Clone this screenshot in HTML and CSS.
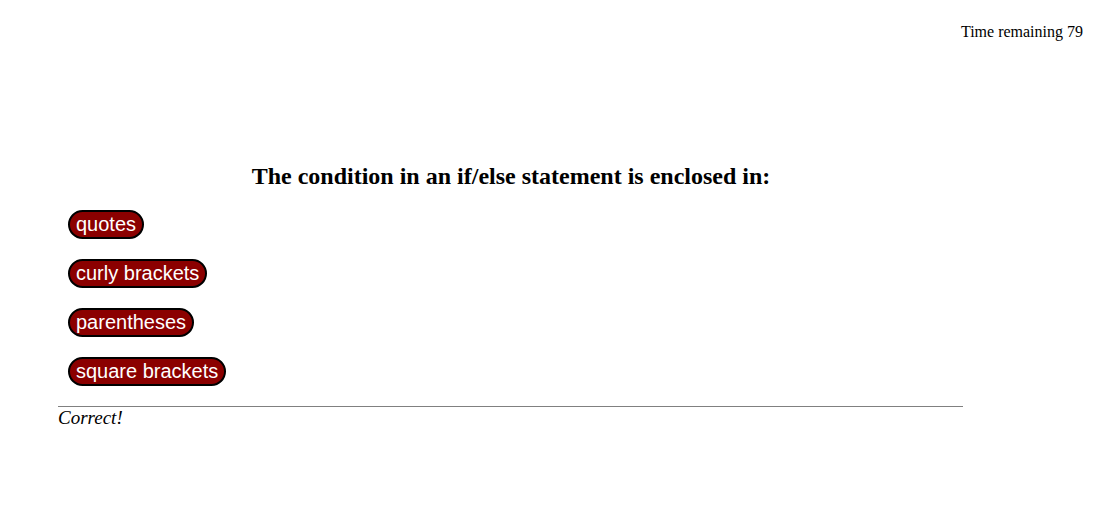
FILE: index.html
```html
<!DOCTYPE html>
<html>
<head>
<meta charset="utf-8">
<link rel="stylesheet" href="styles.css">
</head>
<body>
<div class="timer">Time remaining 79</div>
<div class="quiz">
  <h2 class="question">The condition in an if/else statement is enclosed in:</h2>
  <ul class="answers">
    <li><button class="answer">quotes</button></li>
    <li><button class="answer">curly brackets</button></li>
    <li><button class="answer">parentheses</button></li>
    <li><button class="answer">square brackets</button></li>
  </ul>
  <hr class="divider">
  <p class="feedback">Correct!</p>
</div>
</body>
</html>
```
FILE: styles.css
```css
body {
  margin: 8px;
  font-family: "Liberation Serif", "Times New Roman", serif;
  font-size: 16px;
  color: #000;
}
.timer {
  display: flex;
  justify-content: flex-end;
  padding: 15px 11px 0 0;
  line-height: 18px;
}
.quiz {
  width: 905px;
  margin: 0 0 0 50px;
}
.question {
  text-align: center;
  font-size: 24px;
  font-weight: bold;
  margin: 121px 0 0 1px;
  line-height: 28px;
}
.answers {
  list-style: none;
  margin: 20px 0 0;
  padding: 0 0 0 10px;
  display: flex;
  flex-direction: column;
  align-items: flex-start;
  gap: 20px;
}
.answer {
  font-family: "Liberation Sans", Arial, sans-serif;
  font-size: 20px;
  color: #fff;
  background: #8b0000;
  border: 2px solid #000;
  border-radius: 15px;
  padding: 0 6px;
  height: 29px;
  line-height: 25px;
  margin: 0;
  display: block;
}
.divider {
  margin: 20px 0 0;
  border: none;
  border-top: 1px solid #808080;
  height: 0;
}
.feedback {
  margin: 0;
  font-style: italic;
  font-size: 19px;
  line-height: 22px;
}
```
